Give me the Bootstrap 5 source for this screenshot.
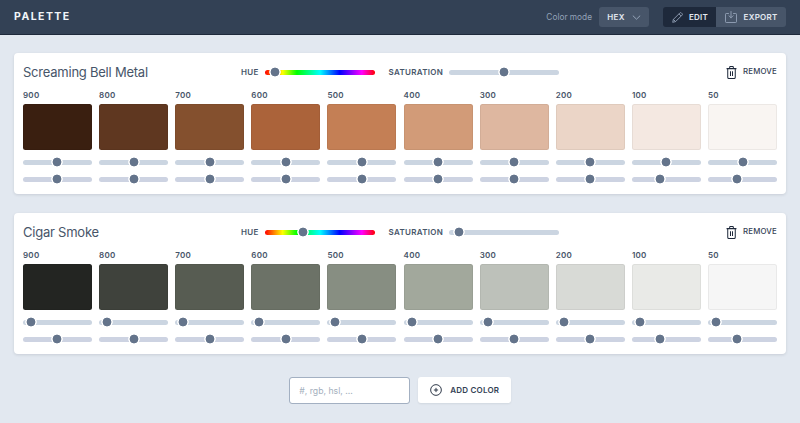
<!DOCTYPE html>
<html lang="en">
<head>
<meta charset="utf-8">
<title>Palette</title>
<link href="https://cdn.jsdelivr.net/npm/bootstrap@5.3.0/dist/css/bootstrap.min.css" rel="stylesheet">
<style>
html,body{height:100%;overflow:hidden}
body{background:#e2e8f0;font-family:Inter,"Liberation Sans",sans-serif;color:#334155}
.pal-bar{height:35px;padding:0 14px;background:#334155;border-bottom:1px solid #1e293b;flex-wrap:nowrap}
.pal-brand{font-size:10.5px;font-weight:700;letter-spacing:1.45px;color:#f1f5f9}
.pal-mode{font-size:8.3px;color:#94a3b8;margin-right:7px}
.pal-btn{font-size:8px;font-weight:600;letter-spacing:.25px;height:20.5px;padding:0;display:inline-flex;align-items:center;justify-content:center;border:0;border-radius:3px;color:#e2e8f0;background:#475569}
.pal-btn:hover,.pal-btn:focus{color:#e2e8f0;background:#475569}
.pal-hex{width:50px;gap:7px;margin-right:14px}
.pal-edit{width:54px;gap:6px;background:#1e293b!important}
.pal-export{width:70px;gap:7px}
.pal-main{padding:18px 14px 0}
.pal-card{border:0;border-radius:4px;padding:9px 9px 0;height:141px;margin-bottom:19px;box-shadow:0 1px 3px rgba(15,23,42,.12)}
.pal-head{height:20px;align-items:center}
.pal-title{width:218px;font-size:13px;letter-spacing:-.23px;font-weight:400;color:#475569;margin:0;line-height:20px;white-space:nowrap}
.pal-lbl{font-size:8px;font-weight:600;letter-spacing:.3px;color:#475569;margin-right:6px;white-space:nowrap}
.pal-rm{margin-left:auto;display:flex;align-items:center;gap:6px;padding:0;border:0;background:none;font-size:7.8px;font-weight:500;letter-spacing:.2px;color:#334155}
.pal-grid{display:grid;grid-template-columns:repeat(10,1fr);column-gap:7.2px;margin-top:8px}
.pal-num{font-size:8px;font-weight:600;letter-spacing:.25px;color:#475569;line-height:10px;margin-bottom:4px}
.pal-sw{height:46px;border-radius:2.5px;box-shadow:inset 0 0 0 1px rgba(0,0,0,.05);margin-bottom:4px}
.pal-rng{display:block;width:100%;height:16px;margin:0;padding:0;background:transparent;-webkit-appearance:none;appearance:none;border-radius:0;outline:0}
.pal-r2{margin-top:1px}
.pal-rng::-webkit-slider-runnable-track{height:5px;border-radius:3px;background:#cbd5e1}
.pal-r2::-webkit-slider-runnable-track{background:#cdd3e2}
.pal-rng::-webkit-slider-thumb{-webkit-appearance:none;appearance:none;width:16px;height:16px;margin-top:-5.5px;border:0;background:radial-gradient(circle,#64748b 0 4.1px,#fff 4.7px 5.4px,transparent 6px)}
.pal-hue::-webkit-slider-runnable-track{background:linear-gradient(90deg,#f00,#ff0 16%,#0f0 29%,#0ff 50%,#00f 68%,#f0f 88%,#f00)}
.pal-long{width:110px;flex:none;margin-right:14px}
.pal-long.pal-last{margin-right:0}
.pal-add{height:27px;margin-top:23px;gap:8.5px}
.pal-input{width:121px;height:27px;min-height:0;font-size:8.7px;padding:0 9.5px;border:1px solid #a3b0c2;border-radius:3px;box-shadow:none}
.pal-input::placeholder{color:#a4afbd}
.pal-addbtn{width:93px;height:26px;padding:0;display:flex;align-items:center;justify-content:center;gap:8px;background:#fff;border:0;border-radius:3px;font-size:8px;font-weight:600;letter-spacing:.2px;color:#334155;box-shadow:0 1px 2px rgba(15,23,42,.08)}
.pal-addbtn:hover{background:#fff;color:#334155}
</style>
</head>
<body>
<nav class="navbar pal-bar d-flex align-items-center">
  <span class="pal-brand">PALETTE</span>
  <div class="d-flex align-items-center ms-auto">
    <span class="pal-mode">Color mode</span>
    <button type="button" class="btn pal-btn pal-hex">HEX
      <svg width="9" height="5" viewBox="0 0 9 5" fill="none" stroke="#94a3b8" stroke-width="1"><path d="M.8.6 4.5 4.2 8.2.6"/></svg>
    </button>
    <div class="btn-group">
      <button type="button" class="btn pal-btn pal-edit">
        <svg width="11" height="11" viewBox="0 0 11 11" fill="none" stroke="#94a3b8" stroke-width=".9" stroke-linejoin="round"><path d="M.7 10.3 1.4 7.4 7.9.9a1 1 0 0 1 1.4 0l.8.8a1 1 0 0 1 0 1.4L3.6 9.6Z"/><path d="M1.4 7.4 3.6 9.6M7 1.9 9.1 4"/></svg>EDIT
      </button>
      <button type="button" class="btn pal-btn pal-export">
        <svg width="12" height="12" viewBox="0 0 12 12" fill="none" stroke="#94a3b8" stroke-width=".9" stroke-linecap="round" stroke-linejoin="round"><path d="M3.5 2.5H1.2a.7.7 0 0 0-.7.7v7.6c0 .4.3.7.7.7h9.6c.4 0 .7-.3.7-.7V3.2a.7.7 0 0 0-.7-.7H8.5"/><path d="M6 .5v6.3M3.9 4.7 6 6.8l2.1-2.1"/></svg>EXPORT
      </button>
    </div>
  </div>
</nav>
<main class="pal-main">
  <section class="card pal-card">
    <div class="d-flex pal-head">
      <h2 class="pal-title">Screaming Bell Metal</h2>
      <span class="pal-lbl">HUE</span>
      <input class="pal-rng pal-hue pal-long" type="range" value="3" aria-label="Hue">
      <span class="pal-lbl">SATURATION</span>
      <input class="pal-rng pal-long pal-last" type="range" value="50" aria-label="Saturation">
      <button type="button" class="pal-rm">
        <svg width="11" height="13" viewBox="0 0 12 13" preserveAspectRatio="none" fill="none" stroke="#1e293b" stroke-width="1.1" stroke-linejoin="round"><path d="M.6 2.6h10.8M4 2.4V1.2c0-.4.3-.7.7-.7h2.6c.4 0 .7.3.7.7v1.2M1.9 2.8v8.5c0 .7.5 1.2 1.2 1.2h5.8c.7 0 1.2-.5 1.2-1.2V2.8M4.9 5.2v4.8M7.1 5.2v4.8"/></svg>REMOVE
      </button>
    </div>
    <div class="pal-grid">
      <div><div class="pal-num">900</div><div class="pal-sw" style="background:#3a1f10"></div><input class="pal-rng" type="range" value="50" aria-label="Lightness"><input class="pal-rng pal-r2" type="range" value="50" aria-label="Saturation"></div>
      <div><div class="pal-num">800</div><div class="pal-sw" style="background:#5f3720"></div><input class="pal-rng" type="range" value="50" aria-label="Lightness"><input class="pal-rng pal-r2" type="range" value="50" aria-label="Saturation"></div>
      <div><div class="pal-num">700</div><div class="pal-sw" style="background:#84502e"></div><input class="pal-rng" type="range" value="50" aria-label="Lightness"><input class="pal-rng pal-r2" type="range" value="50" aria-label="Saturation"></div>
      <div><div class="pal-num">600</div><div class="pal-sw" style="background:#ab633a"></div><input class="pal-rng" type="range" value="50" aria-label="Lightness"><input class="pal-rng pal-r2" type="range" value="50" aria-label="Saturation"></div>
      <div><div class="pal-num">500</div><div class="pal-sw" style="background:#c47f55"></div><input class="pal-rng" type="range" value="50" aria-label="Lightness"><input class="pal-rng pal-r2" type="range" value="50" aria-label="Saturation"></div>
      <div><div class="pal-num">400</div><div class="pal-sw" style="background:#d29b78"></div><input class="pal-rng" type="range" value="50" aria-label="Lightness"><input class="pal-rng pal-r2" type="range" value="50" aria-label="Saturation"></div>
      <div><div class="pal-num">300</div><div class="pal-sw" style="background:#deb7a0"></div><input class="pal-rng" type="range" value="50" aria-label="Lightness"><input class="pal-rng pal-r2" type="range" value="50" aria-label="Saturation"></div>
      <div><div class="pal-num">200</div><div class="pal-sw" style="background:#ebd5c7"></div><input class="pal-rng" type="range" value="50" aria-label="Lightness"><input class="pal-rng pal-r2" type="range" value="50" aria-label="Saturation"></div>
      <div><div class="pal-num">100</div><div class="pal-sw" style="background:#f4e8e1"></div><input class="pal-rng" type="range" value="50" aria-label="Lightness"><input class="pal-rng pal-r2" type="range" value="38" aria-label="Saturation"></div>
      <div><div class="pal-num">50</div><div class="pal-sw" style="background:#f9f5f2"></div><input class="pal-rng" type="range" value="50" aria-label="Lightness"><input class="pal-rng pal-r2" type="range" value="39" aria-label="Saturation"></div>
    </div>
  </section>
  <section class="card pal-card">
    <div class="d-flex pal-head">
      <h2 class="pal-title">Cigar Smoke</h2>
      <span class="pal-lbl">HUE</span>
      <input class="pal-rng pal-hue pal-long" type="range" value="32" aria-label="Hue">
      <span class="pal-lbl">SATURATION</span>
      <input class="pal-rng pal-long pal-last" type="range" value="2" aria-label="Saturation">
      <button type="button" class="pal-rm">
        <svg width="11" height="13" viewBox="0 0 12 13" preserveAspectRatio="none" fill="none" stroke="#1e293b" stroke-width="1.1" stroke-linejoin="round"><path d="M.6 2.6h10.8M4 2.4V1.2c0-.4.3-.7.7-.7h2.6c.4 0 .7.3.7.7v1.2M1.9 2.8v8.5c0 .7.5 1.2 1.2 1.2h5.8c.7 0 1.2-.5 1.2-1.2V2.8M4.9 5.2v4.8M7.1 5.2v4.8"/></svg>REMOVE
      </button>
    </div>
    <div class="pal-grid">
      <div><div class="pal-num">900</div><div class="pal-sw" style="background:#232522"></div><input class="pal-rng" type="range" value="0" aria-label="Lightness"><input class="pal-rng pal-r2" type="range" value="50" aria-label="Saturation"></div>
      <div><div class="pal-num">800</div><div class="pal-sw" style="background:#3f423c"></div><input class="pal-rng" type="range" value="0" aria-label="Lightness"><input class="pal-rng pal-r2" type="range" value="50" aria-label="Saturation"></div>
      <div><div class="pal-num">700</div><div class="pal-sw" style="background:#575c52"></div><input class="pal-rng" type="range" value="0" aria-label="Lightness"><input class="pal-rng pal-r2" type="range" value="50" aria-label="Saturation"></div>
      <div><div class="pal-num">600</div><div class="pal-sw" style="background:#6c7267"></div><input class="pal-rng" type="range" value="0" aria-label="Lightness"><input class="pal-rng pal-r2" type="range" value="50" aria-label="Saturation"></div>
      <div><div class="pal-num">500</div><div class="pal-sw" style="background:#878e82"></div><input class="pal-rng" type="range" value="0" aria-label="Lightness"><input class="pal-rng pal-r2" type="range" value="50" aria-label="Saturation"></div>
      <div><div class="pal-num">400</div><div class="pal-sw" style="background:#a2a89c"></div><input class="pal-rng" type="range" value="0" aria-label="Lightness"><input class="pal-rng pal-r2" type="range" value="50" aria-label="Saturation"></div>
      <div><div class="pal-num">300</div><div class="pal-sw" style="background:#bdc1ba"></div><input class="pal-rng" type="range" value="0" aria-label="Lightness"><input class="pal-rng pal-r2" type="range" value="50" aria-label="Saturation"></div>
      <div><div class="pal-num">200</div><div class="pal-sw" style="background:#d8dad6"></div><input class="pal-rng" type="range" value="0" aria-label="Lightness"><input class="pal-rng pal-r2" type="range" value="50" aria-label="Saturation"></div>
      <div><div class="pal-num">100</div><div class="pal-sw" style="background:#e9eae7"></div><input class="pal-rng" type="range" value="0" aria-label="Lightness"><input class="pal-rng pal-r2" type="range" value="38" aria-label="Saturation"></div>
      <div><div class="pal-num">50</div><div class="pal-sw" style="background:#f6f6f6"></div><input class="pal-rng" type="range" value="0" aria-label="Lightness"><input class="pal-rng pal-r2" type="range" value="39" aria-label="Saturation"></div>
    </div>
  </section>
  <div class="d-flex justify-content-center pal-add">
    <input class="form-control pal-input" type="text" placeholder="#, rgb, hsl, ...">
    <button type="button" class="btn pal-addbtn">
      <svg width="12" height="12" viewBox="0 0 13 13" fill="none" stroke="#1e293b" stroke-width="1"><circle cx="6.5" cy="6.5" r="5.8"/><path d="M6.5 4.2v4.6M4.2 6.5h4.6"/></svg>ADD COLOR
    </button>
  </div>
</main>
<script src="https://cdn.jsdelivr.net/npm/bootstrap@5.3.0/dist/js/bootstrap.bundle.min.js"></script>
</body>
</html>
